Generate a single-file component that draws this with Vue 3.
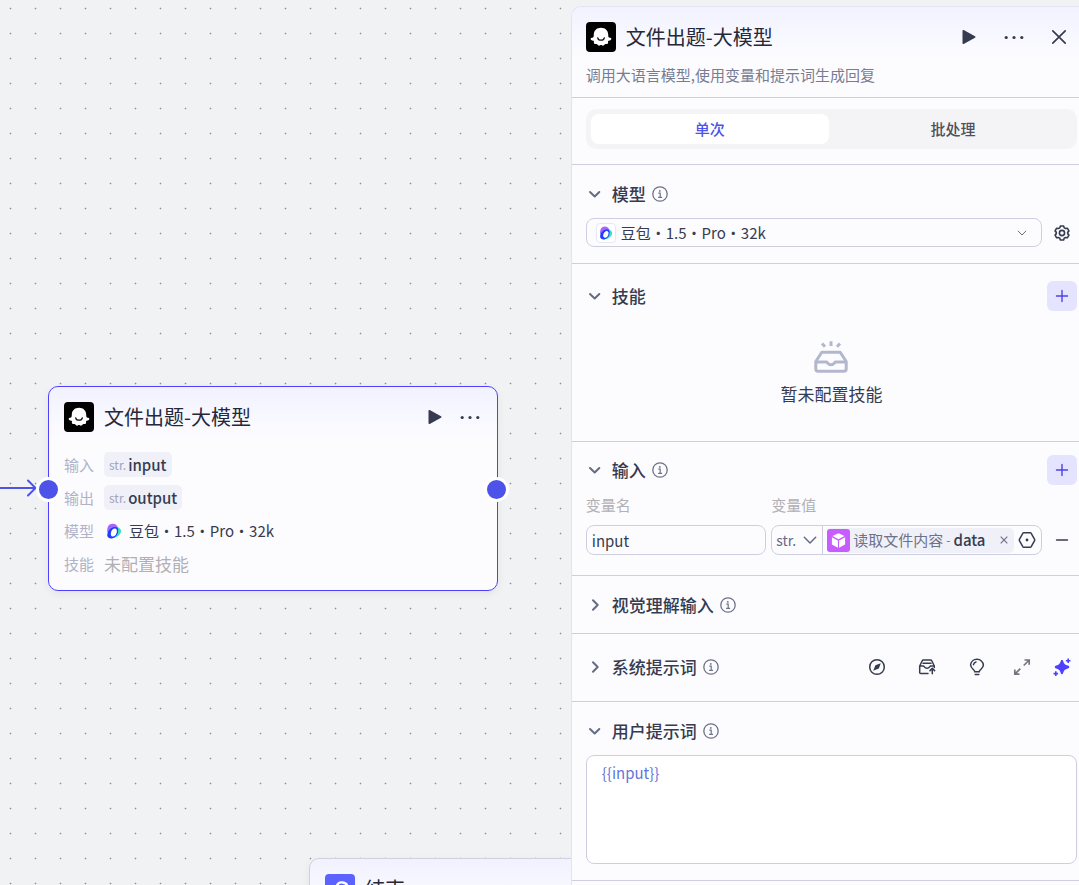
<script setup>
import { ref } from 'vue';

const mode = ref('single');
const model = ref('doubao');
const varName = ref('input');
const varType = ref('str');
const userPrompt = ref('{{input}}');

const modes = [
    { id: 'single', label: '单次' },
    { id: 'batch', label: '批处理' },
];

const variables = [
    { label: '输入', name: 'input' },
    { label: '输出', name: 'output' },
];
</script>

<template>
    <div class="workflow">
        <svg class="symbols" aria-hidden="true">
            <symbol id="i-llm" viewBox="0 0 30 30">
                <rect width="30" height="30" rx="4" fill="#000" />
                <path fill="#fff" d="M15 5.700c4.300 0 7.200 2.900 7.200 6.800 0 1.200.1 2.200.5 2.700.5.600 1.400.4 2.100.8 1 .6.500 1.900-.4 2.300-.9.500-2.100.3-2.300 1-.2.800.4 1.500-.3 2.300-.8.900-1.900.2-2.800.6-.9.400-1.100 1.500-2.200 1.500-.8 0-1-.7-1.800-.7s-1 .7-1.800.7c-1.100 0-1.300-1.100-2.200-1.500-.9-.4-2 .3-2.800-.6-.7-.8-.1-1.500-.3-2.300-.2-.7-1.400-.5-2.300-1-.9-.4-1.400-1.700-.4-2.300.7-.4 1.600-.2 2.100-.8.4-.5.5-1.500.5-2.700 0-3.900 2.900-6.800 7.200-6.800z" />
                <path fill="none" stroke="#111" stroke-width="1.300" stroke-linecap="round" d="M11.700 15.800c.6 3.200 6 3.200 6.600 0" />
            </symbol>
            <symbol id="i-play" viewBox="0 0 20 20">
                <path fill="#363b50" d="M3.500 3.800c0-.7.6-1 1.200-.7l11.300 6.100c.6.400.6 1.100 0 1.500L4.700 16.900c-.6.300-1.200 0-1.200-.7z" />
            </symbol>
            <symbol id="i-more" viewBox="0 0 20 20">
                <g fill="#363b50">
                    <circle cx="2.200" cy="10.500" r="1.600" />
                    <circle cx="10" cy="10.500" r="1.600" />
                    <circle cx="17.800" cy="10.500" r="1.600" />
                </g>
            </symbol>
            <symbol id="i-doubao" viewBox="0 0 16 16">
                <path fill="#36e2bf" d="M10.300 3.800c3.200.7 5.200 2.600 4.600 5.200-.8 3.200-4.200 5.600-8.400 6z" />
                <path fill="#a566ff" d="M1.300 9.500C.8 4 2.700.7 6.500.7c3.300 0 5.200 1.900 5.700 5L8 5.500 4 9z" />
                <path fill="#1f3bff" d="M4.600 5.500C2.300 7.600 1 10.400 1.300 12.700c.4 2.300 3 3.100 5.500 2.500 3.200-.9 5.300-4 5.400-7.700.1-2.200-1-3.600-3-3.600-1.600 0-3.300.6-4.600 1.600z" />
                <path fill="#fff" d="M8.500 5.600c1.700-.2 2.600.9 2.400 2.900-.2 2.500-1.800 4.900-3.800 5-1.700 0-2.500-1.200-2.300-3.100.3-2.400 1.800-4.600 3.700-4.800z" />
            </symbol>
            <symbol id="i-down" viewBox="0 0 18 18">
                <path fill="none" stroke="#656b85" stroke-width="2" stroke-linecap="round" stroke-linejoin="round" d="M4 7l4.700 4.500L13.300 7" />
            </symbol>
            <symbol id="i-right" viewBox="0 0 18 18">
                <path fill="none" stroke="#656b85" stroke-width="2" stroke-linecap="round" stroke-linejoin="round" d="M7 4.300L11.700 9 7 13.700" />
            </symbol>
            <symbol id="i-info" viewBox="0 0 16 16">
                <circle cx="8" cy="8" r="7.200" fill="none" stroke="#6d7288" stroke-width="1.300" />
                <circle cx="7.800" cy="4.900" r=".9" fill="#6d7288" />
                <path fill="none" stroke="#6d7288" stroke-width="1.200" d="M6.300 7.200h1.900v4M6.100 11.300h4" />
            </symbol>
            <symbol id="i-plus" viewBox="0 0 16 16">
                <path fill="none" stroke="#4e40e5" stroke-width="1.400" stroke-linecap="round" d="M2.500 8h11M8 2.500v11" />
            </symbol>
        </svg>

        <main class="canvas">
            <svg class="edge" width="40" height="20" viewBox="0 0 40 20" fill="none" stroke="#4d53e8" stroke-width="2" stroke-linecap="round" stroke-linejoin="round">
                <path d="M0 10h35M28 2.500l7.500 7.500-7.500 7.500" />
            </svg>

            <article class="node node-llm">
                <header class="node-head">
                    <svg class="logo"><use href="#i-llm" /></svg>
                    <h3>文件出题-大模型</h3>
                    <button class="node-action" aria-label="运行"><svg class="icon-20"><use href="#i-play" /></svg></button>
                    <button class="node-action" aria-label="更多"><svg class="icon-20"><use href="#i-more" /></svg></button>
                </header>
                <dl class="node-rows">
                    <template v-for="v in variables" :key="v.name">
                        <dt>{{ v.label }}</dt>
                        <dd><span class="chip"><small>str.</small>{{ v.name }}</span></dd>
                    </template>
                    <dt>模型</dt>
                    <dd><svg class="model-icon"><use href="#i-doubao" /></svg>豆包・1.5・Pro・32k</dd>
                    <dt>技能</dt>
                    <dd class="muted">未配置技能</dd>
                </dl>
                <i class="port port-in"></i>
                <i class="port port-out"></i>
            </article>

            <article class="node node-end">
                <header class="node-head">
                    <svg class="logo" viewBox="0 0 30 30">
                        <rect width="30" height="30" rx="4" fill="#5c62ff" />
                        <path fill="none" stroke="#fff" stroke-width="2.400" stroke-linecap="round" d="M12 11.500c1.500-4.500 10.500-4.500 10.500 2.500v2.500c0 6-11 6-11 0" />
                    </svg>
                    <h3>结束</h3>
                </header>
            </article>
        </main>

        <aside class="panel">
            <header class="panel-head">
                <div class="panel-title">
                    <svg class="logo"><use href="#i-llm" /></svg>
                    <h2>文件出题-大模型</h2>
                    <div class="panel-actions">
                        <button class="icon-btn" aria-label="运行"><svg class="icon-20"><use href="#i-play" /></svg></button>
                        <button class="icon-btn" aria-label="更多"><svg class="icon-20"><use href="#i-more" /></svg></button>
                        <button class="icon-btn" aria-label="关闭">
                            <svg class="icon-20" viewBox="0 0 20 20" fill="none" stroke="#363b50" stroke-width="1.700" stroke-linecap="round"><path d="M3.800 3.800l12.400 12.400M16.200 3.800L3.800 16.200" /></svg>
                        </button>
                    </div>
                </div>
                <p>调用大语言模型,使用变量和提示词生成回复</p>
            </header>

            <div class="tabs-wrap">
                <div class="tabs" role="tablist">
                    <button v-for="m in modes" :key="m.id" role="tab" :class="{ active: mode === m.id }" :aria-selected="mode === m.id" @click="mode = m.id">{{ m.label }}</button>
                </div>
            </div>

            <section class="block">
                <div class="block-head">
                    <button class="toggle" aria-expanded="true"><svg class="icon-18"><use href="#i-down" /></svg>模型</button>
                    <svg class="icon-16"><use href="#i-info" /></svg>
                </div>
                <div class="model-row">
                    <div class="field model-select">
                        <span class="model-badge"><svg class="icon-14"><use href="#i-doubao" /></svg></span>
                        <select v-model="model" aria-label="模型">
                            <option value="doubao">豆包・1.5・Pro・32k</option>
                        </select>
                        <svg class="icon-10" viewBox="0 0 10 10" fill="none" stroke="#656b85" stroke-linecap="round" stroke-linejoin="round"><path d="M1.300 3.200L5 7l3.700-3.800" /></svg>
                    </div>
                    <button class="icon-btn" aria-label="模型设置">
                        <svg class="icon-16" viewBox="0 0 18 18" fill="none" stroke="#363b50" stroke-width="1.800" stroke-linejoin="round">
                            <path d="M7.200 1.200h3.600l.7 2 1.500.8 2-.4 1.800 3-1.400 1.700v1.400l1.400 1.700-1.800 3-2-.4-1.500.8-.7 2H7.200l-.7-2-1.500-.8-2 .4-1.800-3 1.400-1.700V8.300L1.200 6.600l1.800-3 2 .4 1.500-.8z" />
                            <circle cx="9" cy="9" r="2.900" />
                        </svg>
                    </button>
                </div>
            </section>

            <section class="block block-skills">
                <div class="block-head">
                    <button class="toggle" aria-expanded="true"><svg class="icon-18"><use href="#i-down" /></svg>技能</button>
                    <button class="icon-btn add" aria-label="添加技能"><svg class="icon-16"><use href="#i-plus" /></svg></button>
                </div>
                <div class="empty">
                    <svg width="34" height="32" viewBox="0 0 34 32" fill="none" stroke="#b3b7cd" stroke-width="3" stroke-linejoin="round">
                        <path d="M1.800 20.500L7.800 11.300h18.400l6 9.200v7.500c0 1.500-.8 2.300-2.300 2.300H4.100c-1.500 0-2.300-.8-2.300-2.300z" />
                        <path d="M2 21h10.500c1 0 1.400 2.800 4.500 2.800s3.500-2.800 4.500-2.800H32M17 .3v4.700M8 2.500l3 3.200M26 2.500l-3 3.200" />
                    </svg>
                    <p>暂未配置技能</p>
                </div>
            </section>

            <section class="block block-input">
                <div class="block-head">
                    <button class="toggle" aria-expanded="true"><svg class="icon-18"><use href="#i-down" /></svg>输入</button>
                    <svg class="icon-16"><use href="#i-info" /></svg>
                    <button class="icon-btn add" aria-label="添加输入"><svg class="icon-16"><use href="#i-plus" /></svg></button>
                </div>
                <div class="var-grid">
                    <label for="var-name">变量名</label>
                    <label for="var-type">变量值</label>
                    <span></span>
                    <input id="var-name" v-model="varName" class="field" type="text">
                    <div class="field value-field">
                        <div class="type-select">
                            <select id="var-type" v-model="varType">
                                <option value="str">str.</option>
                            </select>
                            <svg class="icon-16" viewBox="0 0 16 16" fill="none" stroke="#656b85" stroke-width="1.500" stroke-linecap="round" stroke-linejoin="round"><path d="M2.300 5.300L8 11l5.700-5.700" /></svg>
                        </div>
                        <div class="tag">
                            <svg class="tag-icon" viewBox="0 0 23 23">
                                <rect width="23" height="23" rx="3" fill="#c75cff" />
                                <path fill="#fff" d="M11.500 4.200l6 2.900-6 3.200-6-3.200zM4.900 8.300l6 3.200v7.200l-6-3.200zM18.100 8.300l-6 3.200v7.200l6-3.200z" />
                            </svg>
                            <span class="tag-source">读取文件内容</span>
                            <span class="tag-sep">-</span>
                            <b>data</b>
                            <button class="tag-close" aria-label="清除">
                                <svg class="icon-10" viewBox="0 0 10 10" fill="none" stroke="#6d7288" stroke-width="1.200"><path d="M1.700 1.700l6.600 6.600M8.300 1.700L1.700 8.300" /></svg>
                            </button>
                        </div>
                        <button class="pick" aria-label="选择变量">
                            <svg class="icon-18" viewBox="0 0 18 18" fill="none" stroke="#363b50" stroke-width="1.500" stroke-linejoin="round">
                                <path d="M5.600 1.800h6.800c.4 0 .6.200.8.500l3.400 6c.2.500.2.900 0 1.400l-3.400 6c-.2.300-.4.500-.8.500H5.600c-.4 0-.6-.2-.8-.5l-3.400-6c-.2-.5-.2-.9 0-1.400l3.400-6c.2-.3.400-.5.800-.5z" />
                                <circle cx="9" cy="9" r="1.400" fill="#363b50" stroke="none" />
                            </svg>
                        </button>
                    </div>
                    <button class="icon-btn" aria-label="删除">
                        <svg class="icon-16" viewBox="0 0 16 16" stroke="#363b50" stroke-width="1.600" stroke-linecap="round"><path d="M2.600 8h10.800" /></svg>
                    </button>
                </div>
            </section>

            <section class="block">
                <div class="block-head">
                    <button class="toggle" aria-expanded="false"><svg class="icon-18"><use href="#i-right" /></svg>视觉理解输入</button>
                    <svg class="icon-16"><use href="#i-info" /></svg>
                </div>
            </section>

            <section class="block block-system">
                <div class="block-head">
                    <button class="toggle" aria-expanded="false"><svg class="icon-18"><use href="#i-right" /></svg>系统提示词</button>
                    <svg class="icon-16"><use href="#i-info" /></svg>
                    <div class="prompt-tools">
                        <button class="icon-btn" aria-label="探索">
                            <svg class="icon-18" viewBox="0 0 18 18" fill="none" stroke="#363b50" stroke-width="1.500">
                                <circle cx="9" cy="9" r="7.300" />
                                <path fill="#363b50" stroke="none" d="M12.800 5.200l-2 5.300-5.600 2.300 2.200-5.500z" />
                            </svg>
                        </button>
                        <button class="icon-btn" aria-label="提示词库">
                            <svg class="icon-18" viewBox="0 0 18 18" fill="none" stroke="#363b50" stroke-width="1.500" stroke-linecap="round" stroke-linejoin="round">
                                <path d="M10 15.500H2.700c-.7 0-1-.3-1-1V8l2.400-5c.3-.6.600-.9 1.200-.9h7.400c.6 0 .9.300 1.200.9L16.300 8v1.500M1.700 8h3.800c.7 0 .9 2.300 3.500 2.300S11.800 8 12.500 8h3.800M5 5.300h8M14.300 15.800v-5.300M12 12.600l2.300-2.300 2.300 2.300" />
                            </svg>
                        </button>
                        <button class="icon-btn" aria-label="优化建议">
                            <svg class="icon-18" viewBox="0 0 18 18" fill="none" stroke="#363b50" stroke-width="1.500" stroke-linecap="round">
                                <path d="M6.800 13.700c0-1.900-4.200-3-4.200-7A6.300 6.200 0 0 1 9 1.300a6.300 6.200 0 0 1 6.400 5.800c0 3.600-4.200 4.700-4.200 6.600zM7.200 16.400h3.600M5.500 6.700C5.700 5.300 6.700 4.300 8 4" />
                            </svg>
                        </button>
                        <div class="tool-pair">
                            <button class="icon-btn" aria-label="展开">
                                <svg class="icon-18" viewBox="0 0 18 18" fill="none" stroke="#74767f" stroke-width="1.700">
                                    <path d="M11.500 2h4.700v4.700M16.200 2l-5.500 5.500M6.500 16.200H1.800v-4.700M1.800 16.200l5.500-5.500" />
                                </svg>
                            </button>
                            <button class="icon-btn" aria-label="智能生成">
                                <svg class="icon-18" viewBox="0 0 18 18" fill="#4e40ff">
                                    <path d="M9 1.900c.7 0 1 .5 1.200 1.300.7 2.500 1.700 3.500 4.600 4.300.9.300 1.500.7 1.500 1.500s-.6 1.200-1.500 1.500c-2.900.8-3.900 1.800-4.600 4.300-.2.900-.5 1.500-1.200 1.500s-1.100-.6-1.300-1.500c-.7-2.500-1.700-3.500-4.400-4.300-.9-.3-1.500-.7-1.500-1.500s.6-1.200 1.500-1.500C6 6.700 7 5.700 7.700 3.200 7.900 2.400 8.300 1.900 9 1.900z" />
                                    <path fill="none" stroke="#4e40ff" stroke-width="1.600" d="M15.200.5v4.600M12.900 2.800h4.600M2.800 13.300v4.600M.5 15.600h4.600" />
                                </svg>
                            </button>
                        </div>
                    </div>
                </div>
            </section>

            <section class="block block-prompt">
                <div class="block-head">
                    <button class="toggle" aria-expanded="true"><svg class="icon-18"><use href="#i-down" /></svg>用户提示词</button>
                    <svg class="icon-16"><use href="#i-info" /></svg>
                </div>
                <textarea v-model="userPrompt" class="field" aria-label="用户提示词" spellcheck="false"></textarea>
            </section>
        </aside>
    </div>
</template>

<style>
body {
    margin: 0;
    background: #f1f2f4;
}
</style>

<style scoped>
.workflow {
    display: grid;
    grid-template-columns: 1fr 47.1%;
    height: 100vh;
    overflow: hidden;
    font-family: "Noto Sans CJK SC", sans-serif;
    font-size: 15px;
    line-height: 22px;
    color: #363b50;
}

.workflow * {
    box-sizing: border-box;
}

.symbols {
    position: absolute;
    width: 0;
    height: 0;
}

button,
input,
select,
textarea {
    font: inherit;
    color: inherit;
    padding: 0;
    border: 0;
    background: none;
    outline: none;
    appearance: none;
}

button {
    cursor: pointer;
}

svg {
    display: block;
    flex: none;
}

h2,
h3,
p,
dl,
dd {
    margin: 0;
}

h2,
h3 {
    font-size: 20px;
    line-height: 30px;
    font-weight: 400;
    color: #26283a;
}

.logo {
    width: 30px;
    height: 30px;
}

.icon-10 {
    width: 10px;
    height: 10px;
}

.icon-14 {
    width: 14px;
    height: 14px;
}

.icon-16 {
    width: 16px;
    height: 16px;
}

.icon-18 {
    width: 18px;
    height: 18px;
}

.icon-20 {
    width: 20px;
    height: 20px;
}

/* canvas */
.canvas {
    position: relative;
    overflow: hidden;
    background-image: radial-gradient(circle, #8f9195 0, #8f9195 0.5px, transparent 1.2px);
    background-size: 25px 25px;
    background-position: -2px -4px;
}

.edge {
    position: absolute;
    left: 0;
    top: 478px;
}

.node {
    position: absolute;
    width: 450px;
    padding: 15px 15px 14px;
    border: 1px solid #cfd0e2;
    border-radius: 10px;
    background: linear-gradient(#f2f2ff, #fcfcff 52px);
    box-shadow: 0 3px 10px rgba(0, 0, 0, 0.06);
}

.node-llm {
    left: 48px;
    top: 386px;
    border-color: #4e40ff;
}

.node-end {
    left: 309px;
    top: 858px;
}

.node-head {
    display: flex;
    align-items: center;
    gap: 10px;
}

.node-head h3 {
    flex: 1;
}

.node-action {
    width: 25px;
    height: 30px;
    display: grid;
    place-items: center;
}

.node-rows {
    display: grid;
    grid-template-columns: 30px 1fr;
    grid-auto-rows: 25px;
    align-items: center;
    gap: 8px 10px;
    margin-top: 20px;
}

.node-rows dt {
    color: #b0b3c8;
}

.node-rows dd {
    display: flex;
    align-items: center;
}

.node-rows .muted {
    font-size: 17px;
    color: #b0b0b5;
}

.chip {
    display: flex;
    align-items: center;
    gap: 2px;
    height: 25px;
    padding: 0 5px;
    border-radius: 5px;
    background: #f0f0f8;
    font-weight: 500;
}

.chip small {
    font-size: 12px;
    font-weight: 400;
    color: #a0a4ba;
}

.model-icon {
    width: 16px;
    height: 16px;
    margin: 0 7px 0 2px;
}

.port {
    position: absolute;
    top: 90px;
    width: 25px;
    height: 25px;
    border: 3px solid #fff;
    border-radius: 50%;
    background: #4d53e8;
}

.port-in {
    left: -13px;
}

.port-out {
    right: -12px;
}

/* panel */
.panel {
    margin-top: 6px;
    border: 1px solid #e3e4f0;
    border-width: 1px 0 0 1px;
    border-radius: 10px 0 0 0;
    background: #fcfcff;
    overflow: hidden;
}

.panel-head,
.tabs-wrap,
.block {
    border-bottom: 1px solid #cdcfe0;
}

.panel-head {
    padding: 15px 5px 11px 14px;
    background: linear-gradient(#f2f2ff, #fcfcff 52px);
}

.panel-title {
    display: flex;
    align-items: center;
    gap: 10px;
    margin-bottom: 12px;
}

.panel-title h2 {
    flex: 1;
}

.panel-actions {
    display: flex;
    gap: 15px;
}

.panel-head p {
    color: #787c93;
}

.icon-btn {
    flex: none;
    width: 30px;
    height: 30px;
    display: grid;
    place-items: center;
    border-radius: 6px;
}

.add {
    margin-left: auto;
    background: #e4e4ff;
}

.tabs-wrap {
    padding: 11px 2px 15px 14px;
}

.tabs {
    display: grid;
    grid-template-columns: 1fr 1fr;
    gap: 5px;
    padding: 5px;
    border-radius: 10px;
    background: #f4f4f6;
}

.tabs button {
    height: 30px;
    border-radius: 8px;
    font-weight: 500;
    color: #4f505c;
}

.tabs .active {
    background: #fff;
    color: #4d53e8;
}

.block {
    padding: 14px 2px 13px 14px;
}

.block-head {
    display: flex;
    align-items: center;
    gap: 6px;
    height: 30px;
}

.toggle {
    display: flex;
    align-items: center;
    gap: 8px;
    font-size: 17px;
    font-weight: 500;
}

.field {
    border: 1px solid #cdcfe0;
    border-radius: 8px;
}

.model-row {
    display: flex;
    align-items: center;
    gap: 5px;
    height: 29px;
    margin: 9px 0 3px;
}

.model-select {
    flex: 1;
    display: flex;
    align-items: center;
    gap: 5px;
    height: 29px;
    padding: 0 14px 0 9px;
}

.model-select select {
    flex: 1;
    height: 27px;
}

.model-badge {
    width: 20px;
    height: 20px;
    display: grid;
    place-items: center;
    border: 1px solid #e8e8f3;
    border-radius: 4px;
    background: #fff;
}

.block-skills {
    padding-top: 17px;
    padding-bottom: 33px;
}

.empty {
    display: flex;
    flex-direction: column;
    align-items: center;
    gap: 8px;
    margin-top: 30px;
}

.empty p {
    margin-bottom: 1px;
    font-size: 17px;
    line-height: 26px;
}

.block-input {
    padding-top: 13px;
    padding-bottom: 20px;
}

.var-grid {
    display: grid;
    grid-template-columns: 2fr 3fr 30px;
    gap: 9px 5px;
    margin-top: 9px;
}

.var-grid label {
    color: #b0b0b5;
}

.var-grid input {
    width: 100%;
    min-width: 0;
    height: 30px;
    padding: 0 5px;
}

.value-field {
    display: flex;
    align-items: center;
    height: 30px;
    min-width: 0;
}

.type-select {
    display: flex;
    align-items: center;
    gap: 5px;
    height: 28px;
    width: 51px;
    padding: 0 4px;
    border-right: 1px solid #cdcfe0;
    color: #656b85;
}

.type-select select {
    width: 22px;
    font-size: 14px;
}

.tag {
    flex: 1;
    min-width: 0;
    display: flex;
    align-items: center;
    gap: 3px;
    height: 25px;
    margin-left: 4px;
    padding-right: 5px;
    border-radius: 5px;
    background: #f0f0f8;
    white-space: nowrap;
}

.tag-icon {
    width: 23px;
    height: 23px;
}

.tag-source,
.tag-sep {
    color: #6d7288;
}

.tag-sep {
    font-size: 12px;
}

.tag b {
    font-weight: 500;
}

.tag-close {
    margin-left: auto;
}

.pick {
    padding: 0 5px 0 4px;
}

.block-system {
    padding-top: 18px;
    padding-bottom: 19px;
}

.prompt-tools {
    display: flex;
    gap: 20px;
    margin-left: auto;
}

.tool-pair {
    display: flex;
    gap: 10px;
    margin-left: -5px;
}

.block-prompt {
    padding-bottom: 16px;
}

.block-prompt textarea {
    display: block;
    width: 100%;
    height: 109px;
    margin-top: 9px;
    padding: 6px 15px;
    background: #fff;
    color: #6675d9;
    resize: none;
}
</style>
